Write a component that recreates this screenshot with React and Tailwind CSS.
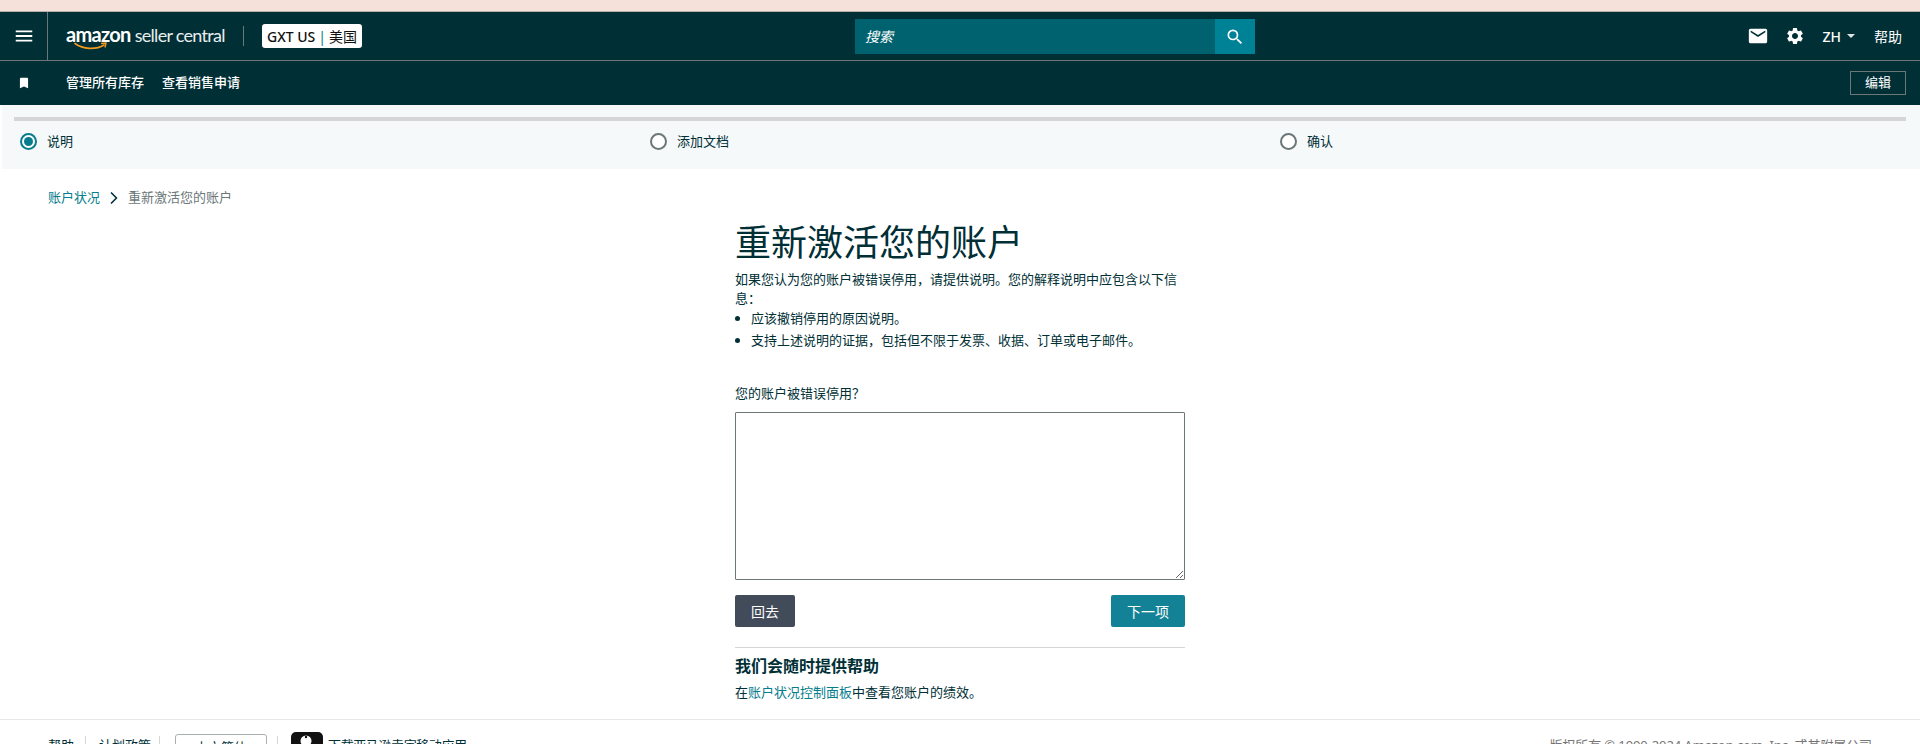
import React from "react";
import { ChevronRight } from "lucide-react";
import { MdMenu, MdSearch, MdEmail, MdSettings, MdBookmark } from "react-icons/md";

const cjk = "font-['Noto_Sans','Noto_Sans_CJK_SC',sans-serif]";

const Step = ({ label, active }) => (
  <div className="flex items-center w-[630px] shrink-0">
    <span
      className={`w-[17px] h-[17px] rounded-full border-2 flex items-center justify-center bg-white ${
        active ? "border-[#067d8d]" : "border-[#6c7778]"
      }`}
    >
      {active && <span className="w-[9px] h-[9px] rounded-full bg-[#067d8d]" />}
    </span>
    <span className="ml-[10px] text-[13px] text-[#002f36]">{label}</span>
  </div>
);

const Header = () => (
  <>
    <div className="h-[12px] bg-[#f5e1da] border-b border-[#b8b0ab]" />
    <div className="h-[49px] bg-[#002f36] border-b border-[#6c7778] flex items-stretch text-white relative">
      <div className="w-[48px] border-r border-[#6c7778] flex items-center justify-center">
        <MdMenu size={22} />
      </div>
      <div className="flex items-center ml-[18px]">
        <div className="relative -mt-[5px] leading-none flex items-baseline w-[159px] whitespace-nowrap font-['Lato',sans-serif]">
          <span className="text-[20px] font-bold tracking-[-0.7px]">amazon</span>
          <span className="text-[18px] ml-[4px] tracking-[-0.7px] text-[#e8eeee]">seller central</span>
          <svg className="absolute left-[8px] top-[18px]" width="34" height="9" viewBox="0 0 34 9" fill="none">
            <path d="M1 1.5C9 7.5 22 8 30 3" stroke="#f49b1f" strokeWidth="1.6" strokeLinecap="round" />
            <path d="M27 1.5L32 1L31 5.5" stroke="#f49b1f" strokeWidth="1.4" />
          </svg>
        </div>
        <div className="w-px h-[20px] bg-[#6c7778] ml-[18px]" />
        <div className="ml-[18px] h-[24px] w-[100px] bg-white rounded-[3px] flex items-center justify-center text-[14px] font-medium text-[#0f1111] whitespace-nowrap">
          GXT US<span className="text-[#067d8d] font-normal mx-[3px]">|</span>
          <span className="font-normal">美国</span>
        </div>
      </div>
      <div className="absolute left-[855px] top-[7px] w-[400px] h-[35px] flex">
        <div className="flex-1 bg-[#00626f] flex items-center pl-[10px] text-[14px] italic">搜索</div>
        <div className="w-[40px] bg-[#008296] flex items-center justify-center">
          <MdSearch size={20} />
        </div>
      </div>
      <div className="ml-auto flex items-center pr-[18px]">
        <MdEmail size={22} />
        <MdSettings size={20} className="ml-[16px]" />
        <span className="ml-[17px] text-[14px] font-medium">ZH</span>
        <span className="ml-[6px] w-0 h-0 border-x-[4px] border-x-transparent border-t-[4px] border-t-[#dfe5e5]" />
        <span className="ml-[19px] text-[14px]">帮助</span>
      </div>
    </div>
    <div className="h-[44px] bg-[#002f36] flex items-center text-white text-[13px]">
      <MdBookmark size={14} className="ml-[17px]" />
      <span className="ml-[35px] font-medium">管理所有库存</span>
      <span className="ml-[18px] font-medium">查看销售申请</span>
      <button className="ml-auto mr-[14px] w-[56px] h-[24px] border border-[#6c7778] text-[13px]">编辑</button>
    </div>
  </>
);

export default function App() {
  return (
    <div className={`h-screen overflow-hidden bg-white text-[13px] text-[#002f36] ${cjk}`}>
      <Header />

      <div className="h-[64px] ml-[2px] bg-[#f5f9fa] pl-[12px] pr-[14px] pt-[12px]">
        <div className="h-[4px] bg-[#d5d5d8]" />
        <div className="flex pl-[6px] mt-[11px]">
          <Step label="说明" active />
          <Step label="添加文档" />
          <Step label="确认" />
        </div>
      </div>

      <div className="flex items-center pl-[48px] mt-[19px] h-[19px]">
        <a className="text-[#067d8d]">账户状况</a>
        <ChevronRight size={20} strokeWidth={2} className="ml-[4px] mr-[4px] text-[#002f36]" />
        <span className="text-[#6c7778]">重新激活您的账户</span>
      </div>

      <main className="w-[450px] ml-[735px]">
        <h1 className="text-[36px] leading-[48px] font-normal mt-[12px]">重新激活您的账户</h1>
        <p className="leading-[19px] mt-[3px]">
          如果您认为您的账户被错误停用，请提供说明。您的解释说明中应包含以下信息：
        </p>
        <ul className="list-disc pl-[16px] leading-[19px] mt-[1px]">
          <li className="mb-[3px]">应该撤销停用的原因说明。</li>
          <li>支持上述说明的证据，包括但不限于发票、收据、订单或电子邮件。</li>
        </ul>
        <label className="block mt-[34px] leading-[19px]">您的账户被错误停用？</label>
        <textarea className="block w-full h-[168px] mt-[9px] border border-[#6c7778] rounded-[1px]" />
        <div className="flex justify-between mt-[15px]">
          <button className="w-[60px] h-[32px] bg-[#414b5a] text-white rounded-[2px] text-[14px]">回去</button>
          <button className="w-[74px] h-[32px] bg-[#148296] text-white rounded-[2px] text-[14px]">下一项</button>
        </div>
        <div className="h-px bg-[#d5d5d8] mt-[20px]" />
        <h2 className="text-[16px] font-bold leading-[24px] mt-[6px]">我们会随时提供帮助</h2>
        <p className="leading-[19px] mt-[5px]">
          在<a className="text-[#067d8d]">账户状况控制面板</a>中查看您账户的绩效。
        </p>
      </main>

      <footer className="mt-[17px] border-t border-[#e7e7e7] flex items-start text-[13px] pt-[16px] pl-[48px] pr-[48px]">
        <span>帮助</span>
        <span className="w-px h-[16px] bg-[#d5d5d8] ml-[11px] mr-[13px]" />
        <span>计划政策</span>
        <span className="w-px h-[16px] bg-[#d5d5d8] ml-[8px] mr-[15px]" />
        <span className="w-[92px] h-[28px] -mt-[2px] pt-[3px] border border-[#aab0b0] rounded-[3px] text-center">中文简体</span>
        <span className="w-px h-[16px] bg-[#d5d5d8] ml-[10px] mr-[13px]" />
        <svg className="-mt-[4px]" width="32" height="28" viewBox="0 0 32 28">
          <rect width="32" height="28" rx="5" fill="#111" />
          <circle cx="15" cy="9" r="5.5" fill="#fff" />
          <circle cx="15" cy="5" r="1.2" fill="#111" />
        </svg>
        <span className="ml-[5px] tracking-[-0.4px]">下载亚马逊卖家移动应用</span>
        <span className="ml-auto text-[#767676] tracking-[-0.1px]">版权所有 © 1990-2024 Amazon.com, Inc. 或其附属公司</span>
      </footer>
    </div>
  );
}
